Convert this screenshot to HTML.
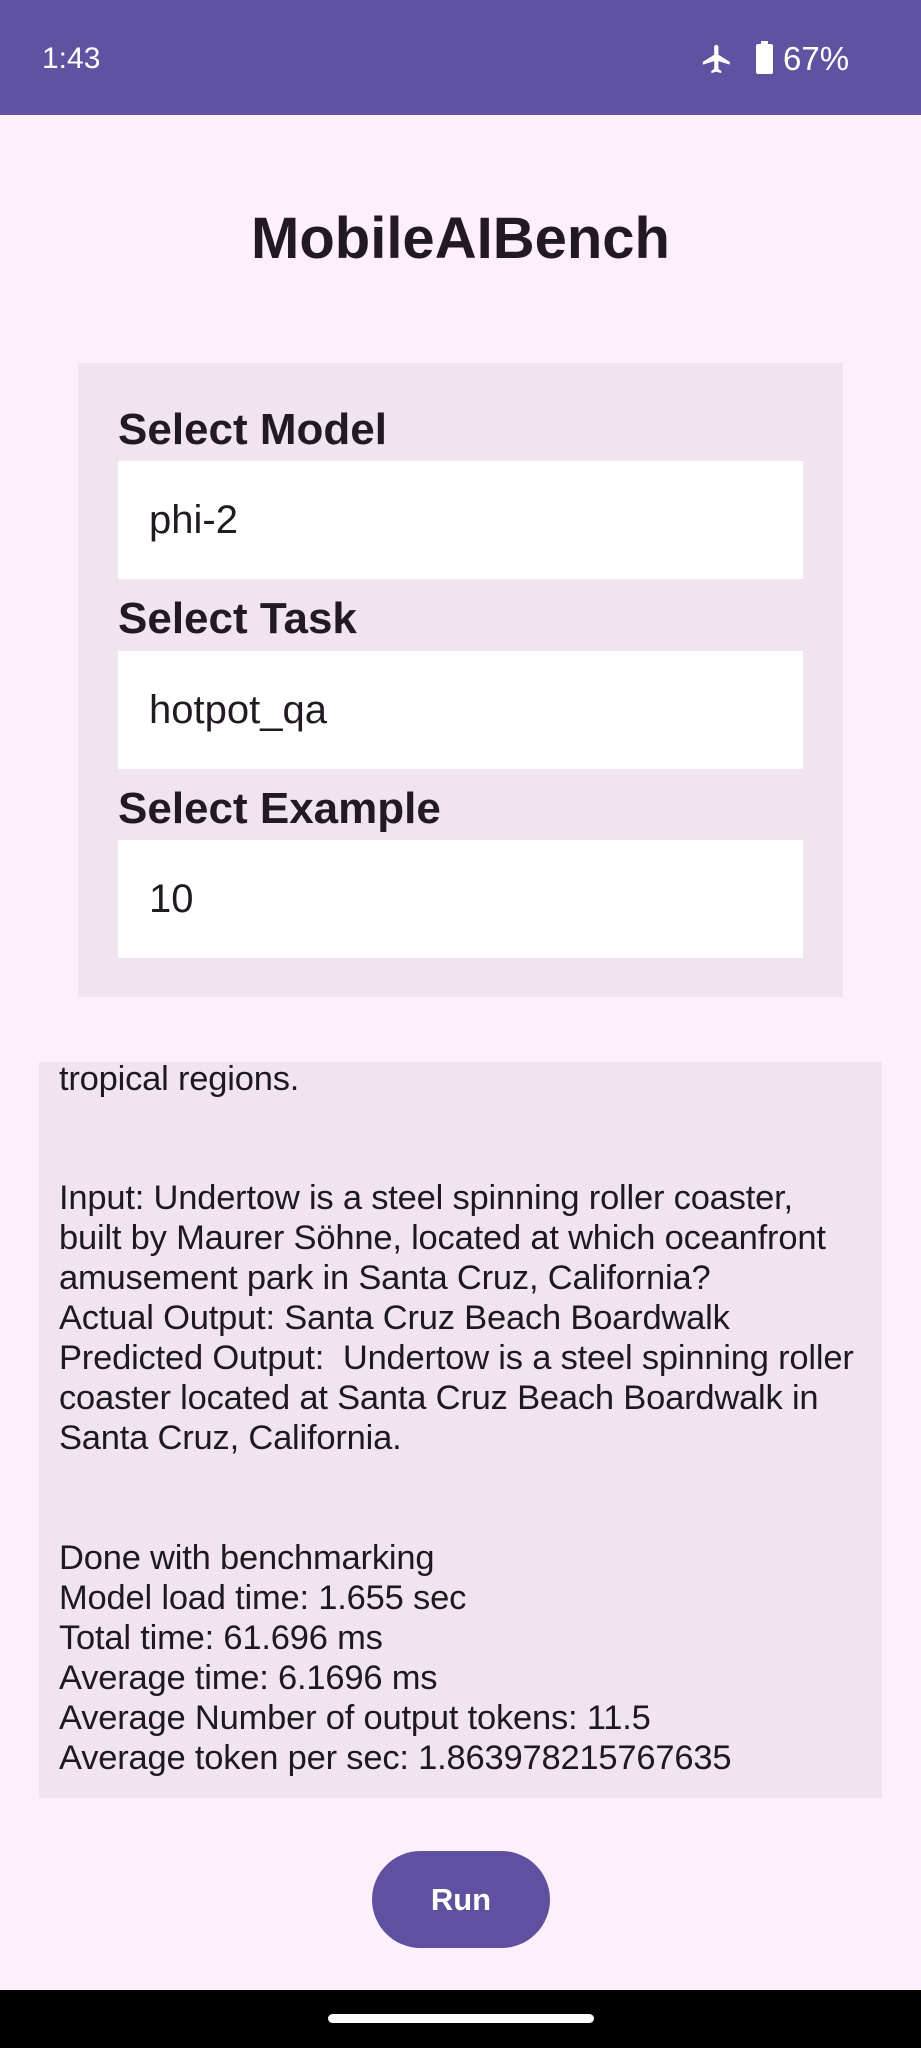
<!DOCTYPE html>
<html><head><meta charset="utf-8"><style>
*{margin:0;padding:0;box-sizing:border-box}
body{width:921px;height:2048px;background:#fdf0fb;font-family:"Liberation Sans",sans-serif;position:relative;overflow:hidden;color:#1d1a1f}
.sb{position:absolute;left:0;top:0;width:921px;height:115px;background:#5f52a0;color:#fff}
.abs{position:absolute}
.title{position:absolute;top:205px;width:921px;text-align:center;font-weight:bold;font-size:58px;color:#221a22}
.card{position:absolute;left:78px;top:363px;width:765px;height:634px;background:#f1e4f1}
.lbl{position:absolute;left:118px;font-weight:bold;font-size:44px;color:#221a22}
.box{position:absolute;left:118px;width:685px;height:118px;background:#fff;font-size:40px;padding-left:31px;line-height:118px;color:#221a22}
.out{position:absolute;left:39px;top:1062px;width:843px;height:736px;background:#f1e4f1}
.t{position:absolute;left:59px;font-size:34.5px;white-space:nowrap;color:#1d1a1f;letter-spacing:-0.2px}
.run{position:absolute;left:372px;top:1851px;width:178px;height:97px;border-radius:49px;background:#6050a0;color:#fff;font-weight:bold;font-size:31px;text-align:center;line-height:97px}
.nav{position:absolute;left:0;top:1990px;width:921px;height:58px;background:#000}
.handle{position:absolute;left:328px;top:2014px;width:266px;height:9px;border-radius:5px;background:#fff}
</style></head><body>
<div class="sb">
<div class="abs" style="left:42px;top:42px;font-size:30px">1:43</div>
<svg class="abs" style="left:700px;top:42px" width="34" height="34" viewBox="0 0 24 24"><path fill="#fff" d="M21 16v-2l-8-5V3.5C13 2.7 12.3 2 11.5 2S10 2.7 10 3.5V9l-8 5v2l8-2.5V19l-2 1.5V22l3.5-1 3.5 1v-1.5L13 19v-5.5l8 2.5z"/></svg>
<div class="abs" style="left:756px;top:44px;width:17px;height:30px;background:#fff;border-radius:2px"></div>
<div class="abs" style="left:761px;top:41px;width:7px;height:4px;background:#fff"></div>
<div class="abs" style="left:783px;top:40px;font-size:33px">67%</div>
</div>
<div class="title">MobileAIBench</div>
<div class="card"></div>
<div class="lbl" style="top:405px">Select Model</div>
<div class="box" style="top:461px">phi-2</div>
<div class="lbl" style="top:594px">Select Task</div>
<div class="box" style="top:651px">hotpot_qa</div>
<div class="lbl" style="top:784px">Select Example</div>
<div class="box" style="top:840px">10</div>
<div class="out"></div>
<div class="t" style="top:1060px">tropical regions.</div>
<div class="t" style="top:1179px">Input: Undertow is a steel spinning roller coaster,</div>
<div class="t" style="top:1219px">built by Maurer Söhne, located at which oceanfront</div>
<div class="t" style="top:1259px">amusement park in Santa Cruz, California?</div>
<div class="t" style="top:1299px">Actual Output: Santa Cruz Beach Boardwalk</div>
<div class="t" style="top:1339px">Predicted Output:&nbsp; Undertow is a steel spinning roller</div>
<div class="t" style="top:1379px">coaster located at Santa Cruz Beach Boardwalk in</div>
<div class="t" style="top:1419px">Santa Cruz, California.</div>
<div class="t" style="top:1539px">Done with benchmarking</div>
<div class="t" style="top:1579px">Model load time: 1.655 sec</div>
<div class="t" style="top:1619px">Total time: 61.696 ms</div>
<div class="t" style="top:1659px">Average time: 6.1696 ms</div>
<div class="t" style="top:1699px">Average Number of output tokens: 11.5</div>
<div class="t" style="top:1739px">Average token per sec: 1.863978215767635</div>
<div class="run">Run</div>
<div class="nav"></div>
<div class="handle"></div>
</body></html>
